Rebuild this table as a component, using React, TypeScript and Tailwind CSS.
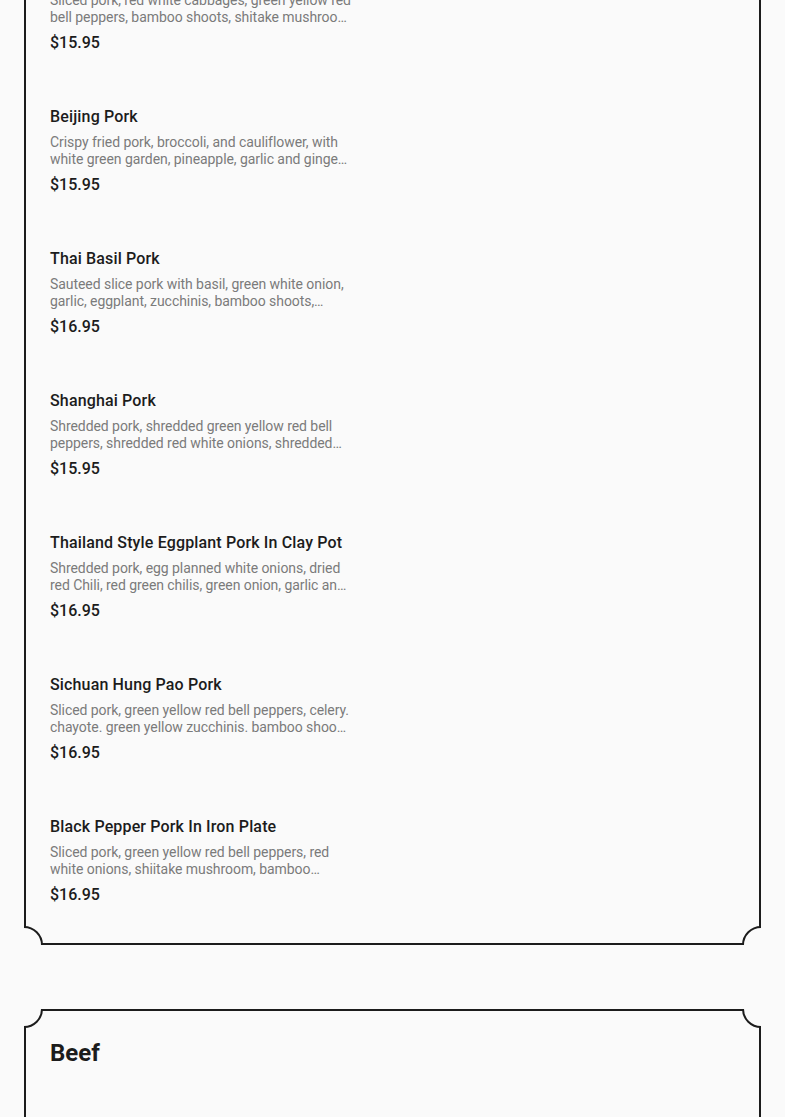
import React from "react";

type Item = { name: string; lines: [string, string]; price: string };

const pork: Item[] = [
  { name: "Twice Cooked Pork", lines: ["Sliced pork, red white cabbages, green yellow red", "bell peppers, bamboo shoots, shitake mushroo…"], price: "$15.95" },
  { name: "Beijing Pork", lines: ["Crispy fried pork, broccoli, and cauliflower, with", "white green garden, pineapple, garlic and ginge…"], price: "$15.95" },
  { name: "Thai Basil Pork", lines: ["Sauteed slice pork with basil, green white onion,", "garlic, eggplant, zucchinis, bamboo shoots,…"], price: "$16.95" },
  { name: "Shanghai Pork", lines: ["Shredded pork, shredded green yellow red bell", "peppers, shredded red white onions, shredded…"], price: "$15.95" },
  { name: "Thailand Style Eggplant Pork In Clay Pot", lines: ["Shredded pork, egg planned white onions, dried", "red Chili, red green chilis, green onion, garlic an…"], price: "$16.95" },
  { name: "Sichuan Hung Pao Pork", lines: ["Sliced pork, green yellow red bell peppers, celery.", "chayote. green yellow zucchinis. bamboo shoo…"], price: "$16.95" },
  { name: "Black Pepper Pork In Iron Plate", lines: ["Sliced pork, green yellow red bell peppers, red", "white onions, shiitake mushroom, bamboo…"], price: "$16.95" },
];

function Corner({ pos }: { pos: "tl" | "tr" | "bl" | "br" }) {
  const place =
    pos === "tl"
      ? "-top-[2px] -left-[2px]"
      : pos === "tr"
      ? "-top-[2px] -right-[2px]"
      : pos === "bl"
      ? "-bottom-[2px] -left-[2px]"
      : "-bottom-[2px] -right-[2px]";
  const c = pos === "tl" ? [0, 0] : pos === "tr" ? [20, 0] : pos === "bl" ? [0, 20] : [20, 20];
  const r = 18;
  const [cx, cy] = c;
  const sx = cx === 0 ? 1 : -1;
  const sy = cy === 0 ? 1 : -1;
  const p1 = [cx, cy + sy * r];
  const p2 = [cx + sx * r, cy];
  return (
    <svg className={`absolute ${place} w-[20px] h-[20px]`} viewBox="0 0 20 20">
      <circle cx={cx} cy={cy} r={r} fill="#fafafa" />
      <path d={`M${p1[0]} ${p1[1]} A${r} ${r} 0 0 ${pos === "tl" || pos === "br" ? 0 : 1} ${p2[0]} ${p2[1]}`} fill="none" stroke="#1c1c1c" strokeWidth="2" />
    </svg>
  );
}

function Card({ title, children, className = "" }: { title: string; children?: React.ReactNode; className?: string }) {
  return (
    <div className={`relative border-2 border-[#1c1c1c] bg-[#fafafa] px-6 pt-[26px] pb-9 ${className}`}>
      <Corner pos="tl" />
      <Corner pos="tr" />
      <Corner pos="bl" />
      <Corner pos="br" />
      <h2 className="text-[24px] leading-[32px] font-bold text-[#1c1c1c]">{title}</h2>
      {children}
    </div>
  );
}

export default function App() {
  return (
    <div className="h-[1117px] overflow-hidden bg-[#fafafa]" style={{ fontFamily: "Roboto, 'Noto Sans', sans-serif" }}>
      <div className="px-6 -mt-[137px] flex flex-col gap-[64px]">
        <Card title="Pork">
          <div className="mt-[40px] flex flex-col gap-[50px]">
            {pork.map((it) => (
              <div key={it.name} className="w-[304px]">
                <div className="text-[16px] leading-[24px] font-medium tracking-[0.15px] text-[#1c1c1c]">{it.name}</div>
                <div className="mt-[5px] text-[14px] leading-[17px] tracking-[-0.06px] text-[#7b7b7b]">
                  <div className="whitespace-nowrap">{it.lines[0]}</div>
                  <div className="whitespace-nowrap">{it.lines[1]}</div>
                </div>
                <div className="mt-[5px] text-[16px] leading-[24px] font-medium text-[#1c1c1c]">{it.price}</div>
              </div>
            ))}
          </div>
        </Card>
        <Card title="Beef" className="h-[400px]" />
      </div>
    </div>
  );
}
